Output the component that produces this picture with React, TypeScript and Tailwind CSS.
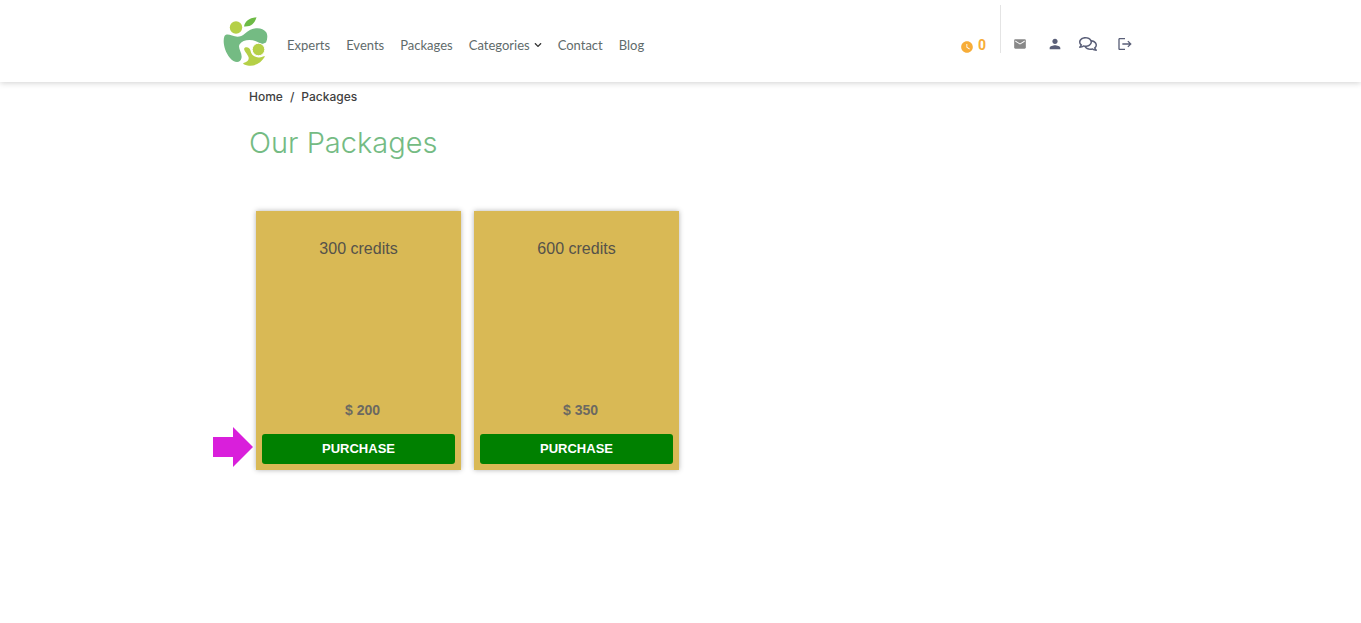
import { FaChevronDown, FaRegComments } from 'react-icons/fa'
import { MdEmail, MdLogout, MdPerson, MdWatchLater } from 'react-icons/md'

interface CreditPackage {
  id: number
  credits: number
  price: number
}

const packages: CreditPackage[] = [
  { id: 1, credits: 300, price: 200 },
  { id: 2, credits: 600, price: 350 }
]

function Logo() {
  return (
    <svg viewBox="0 0 65 65" className="h-[65px] w-[65px]" aria-hidden="true">
      <path d="M29 16.5c1-5.500 5-8.500 12.500-9.300C40 12.500 37 17 29 16.500Z" fill="#6dba45" />
      <circle cx="21" cy="17.500" r="6.200" fill="#b5d047" />
      <path
        d="M9.500 26C11.500 23.500 14 24.500 17 25.500C22 27.500 26 27 30 23.500C37 17 47 16.500 51 22C53 25 52.500 29 51 32.500C48.500 33 47.500 35 45 33.500C38.500 28.500 28 29 24.500 34.500C22.500 38.500 27.500 42.500 26.500 48C25.500 53.500 19 53 15 48C9 41 7.500 31 9.500 26Z"
        fill="#74bb83"
      />
      <circle cx="43.500" cy="39.500" r="6.300" fill="#b5d047" stroke="#fff" strokeWidth="1" />
      <path
        d="M30 37.500C32.500 36.500 35 38 35.500 40.500C36 45 39.500 47 43.500 47.500C46.500 48 48 45.500 50 46.500C46 53 39.500 57 32.500 55.500C29 55 27.500 54 28.500 53C32 52.500 34.500 50 33.500 47C32.500 43.500 27 39.500 30 37.500Z"
        fill="#b5d047"
      />
    </svg>
  )
}

function Navbar() {
  return (
    <header className="bg-white shadow-[0_1px_6px_rgba(0,0,0,0.18)]">
      <div className="mx-auto flex h-[82px] max-w-[931px] items-center">
        <a href="#" aria-label="Home" className="mt-0.5">
          <Logo />
        </a>
        <nav className="ml-[7px] mt-2 flex flex-1 items-center gap-4 text-[13px] leading-5 text-[#5f6b6b]">
          <a href="#">Experts</a>
          <a href="#">Events</a>
          <a href="#">Packages</a>
          <a href="#" className="flex items-center gap-1">
            Categories
            <FaChevronDown className="h-2 w-2 text-[#333]" />
          </a>
          <a href="#">Contact</a>
          <a href="#">Blog</a>
        </nav>
        <div className="mt-2 flex items-center gap-1 font-['Roboto',sans-serif] text-sm font-bold text-[#f7ad38]">
          <MdWatchLater className="mt-1 h-[14px] w-[14px]" />
          <span>0</span>
        </div>
        <div className="mb-6 ml-3.5 h-12 w-px bg-[#e4e4e4]" />
        <div className="mr-[13px] mt-1.5 flex items-center text-[#5a5f78]">
          <a href="#" aria-label="Messages" className="ml-3 text-[#888]">
            <MdEmail className="h-[14px] w-[14px]" />
          </a>
          <a href="#" aria-label="Profile" className="ml-5">
            <MdPerson className="h-4 w-4" />
          </a>
          <a href="#" aria-label="Chat" className="ml-4">
            <FaRegComments className="h-[18px] w-[18px]" />
          </a>
          <a href="#" aria-label="Log out" className="ml-5">
            <MdLogout className="h-4 w-4" />
          </a>
        </div>
      </div>
    </header>
  )
}

function PackageCard({ item }: { item: CreditPackage }) {
  return (
    <div className="flex h-[259px] w-[205px] flex-col bg-[#d9b955] p-1.5 text-center shadow-[0_0_5px_rgba(0,0,0,0.3)]">
      <h2 className="mt-5 text-base text-[#55524a]">{item.credits} credits</h2>
      <p className="mb-3.5 ml-2 mt-auto text-sm font-bold text-[#6c6961]">$ {item.price}</p>
      <button type="button" className="h-[30px] rounded-[3px] bg-[#008000] text-[13px] font-bold text-white">
        PURCHASE
      </button>
    </div>
  )
}

export default function App() {
  return (
    <div className="min-h-screen bg-white font-['Lato',sans-serif]">
      <Navbar />
      <main className="mx-auto max-w-[863px]">
        <nav aria-label="Breadcrumb" className="flex gap-[7px] pt-1.5 font-['Inter',sans-serif] text-xs leading-[18px] font-medium text-[#3f3f3f]">
          <a href="#">Home</a>
          <span>/</span>
          <a href="#">Packages</a>
        </nav>
        <h1 className="mt-[17px] font-['Inter',sans-serif] text-[29px] leading-10 font-light text-[#74bb83]">Our Packages</h1>
        <div className="relative mt-12 flex flex-wrap gap-[13px] pl-[7px] font-['Liberation_Sans',Arial,sans-serif]">
          {packages.map((item) => (
            <PackageCard key={item.id} item={item} />
          ))}
          <svg viewBox="0 0 40 40" className="absolute -left-9 top-[216px] h-10 w-10" aria-hidden="true">
            <path d="M0 10H20V0L40 20L20 40V30H0Z" fill="#d91fdb" />
          </svg>
        </div>
      </main>
    </div>
  )
}
